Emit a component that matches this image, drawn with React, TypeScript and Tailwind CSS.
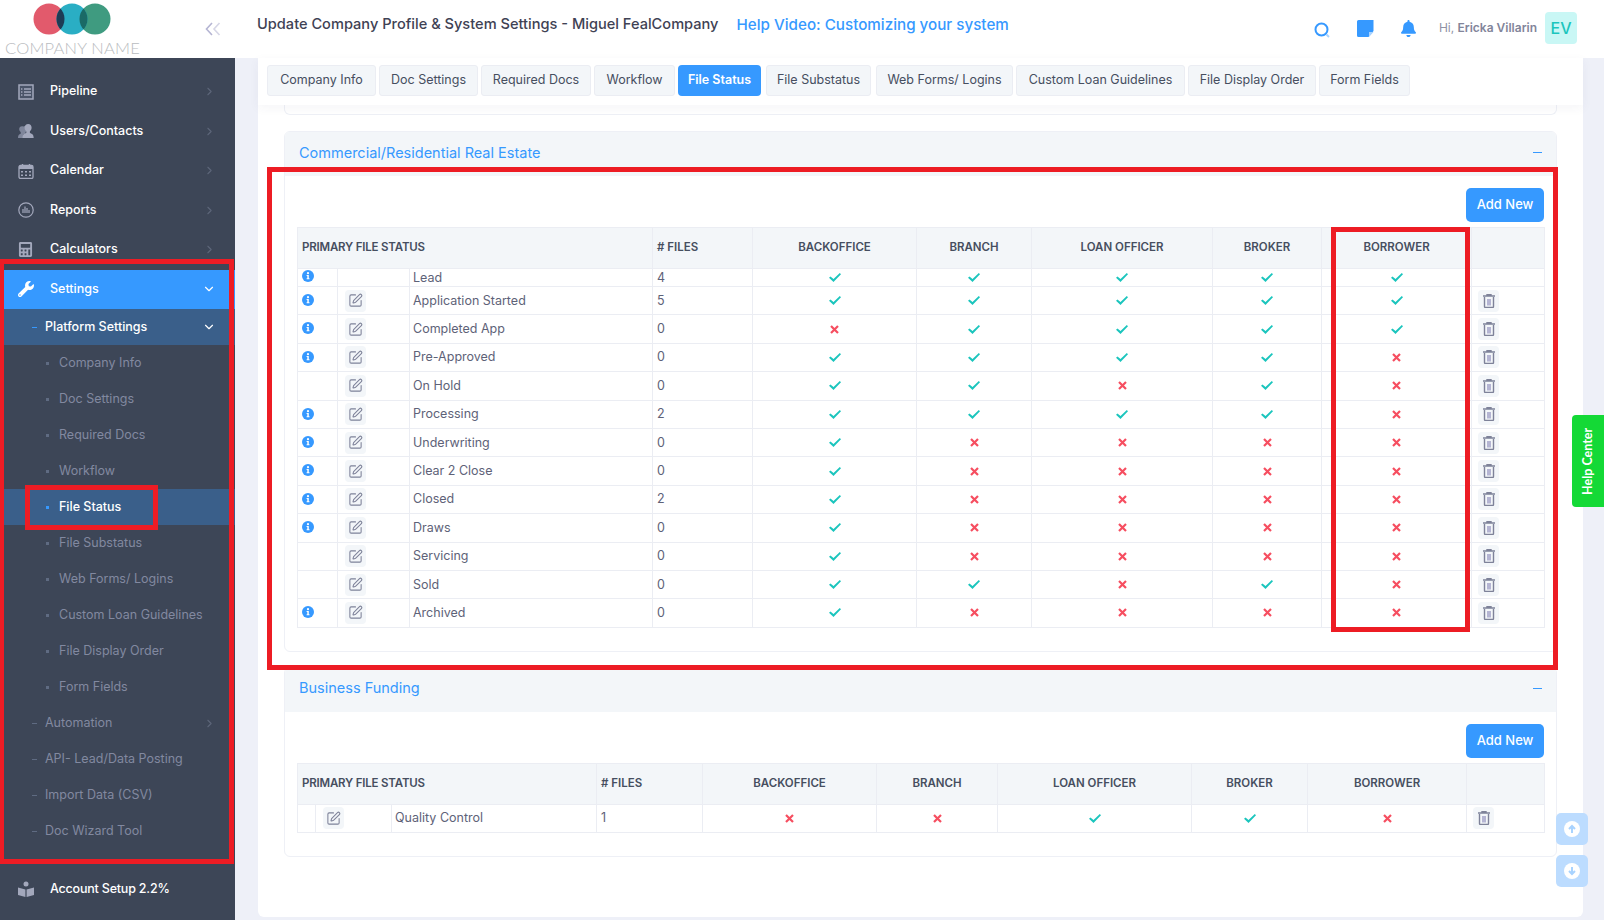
import { ChevronDown, ChevronRight, SquarePen } from "lucide-react";
import { FaBell, FaCalculator, FaWrench } from "react-icons/fa";

const font = { fontFamily: "Inter, 'Liberation Sans', sans-serif" };

const tabs = [
  { label: "Company Info", w: "w-[109px]" },
  { label: "Doc Settings", w: "w-[99px]" },
  { label: "Required Docs", w: "w-[110px]" },
  { label: "Workflow", w: "w-[81px]" },
  { label: "File Status", w: "w-[83px]", active: true },
  { label: "File Substatus", w: "ml-[2px] w-[105px]" },
  { label: "Web Forms/ Logins", w: "ml-[2px] w-[137px]" },
  { label: "Custom Loan Guidelines", w: "w-[169px]" },
  { label: "File Display Order", w: "w-[128px]" },
  { label: "Form Fields", w: "w-[91px]" },
];

type Row = {
  info: boolean;
  edit: boolean;
  name: string;
  files: string;
  perms: string;
  small?: boolean;
};

// perms: backoffice, branch, loan officer, broker, borrower (1 = yes)
const commercial: Row[] = [
  { info: true, edit: false, name: "Lead", files: "4", perms: "11111", small: true },
  { info: true, edit: true, name: "Application Started", files: "5", perms: "11111" },
  { info: true, edit: true, name: "Completed App", files: "0", perms: "01111" },
  { info: true, edit: true, name: "Pre-Approved", files: "0", perms: "11110" },
  { info: false, edit: true, name: "On Hold", files: "0", perms: "11010" },
  { info: true, edit: true, name: "Processing", files: "2", perms: "11110" },
  { info: true, edit: true, name: "Underwriting", files: "0", perms: "10000" },
  { info: true, edit: true, name: "Clear 2 Close", files: "0", perms: "10000" },
  { info: true, edit: true, name: "Closed", files: "2", perms: "10000" },
  { info: true, edit: true, name: "Draws", files: "0", perms: "10000" },
  { info: false, edit: true, name: "Servicing", files: "0", perms: "10000" },
  { info: false, edit: true, name: "Sold", files: "0", perms: "11010" },
  { info: true, edit: true, name: "Archived", files: "0", perms: "10000" },
];

const funding: Row[] = [
  { info: false, edit: true, name: "Quality Control", files: "1", perms: "00110" },
];

const commercialCols = [
  "w-[40px]", "w-[72px]", "w-[243px]", "w-[100px]", "w-[164px]",
  "w-[115px]", "w-[181px]", "w-[109px]", "w-[150px]", "w-[73px]",
];
const fundingCols = [
  "w-[18px]", "w-[76px]", "w-[205px]", "w-[106px]", "w-[174px]",
  "w-[121px]", "w-[194px]", "w-[116px]", "w-[159px]", "w-[78px]",
];

const subItems = [
  "Company Info", "Doc Settings", "Required Docs", "Workflow", "File Status",
  "File Substatus", "Web Forms/ Logins", "Custom Loan Guidelines", "File Display Order", "Form Fields",
];

function Logo() {
  return (
    <svg width="80" height="34" viewBox="0 0 80 34" className="ml-[33px] mt-[3px] block">
      <defs>
        <clipPath id="c-red"><circle cx="16" cy="16" r="15.5" /></clipPath>
        <clipPath id="c-green"><circle cx="62" cy="16" r="15.5" /></clipPath>
      </defs>
      <circle cx="16" cy="16" r="15.5" fill="#e25a6c" />
      <circle cx="62" cy="16" r="15.5" fill="#3f9b80" />
      <circle cx="39" cy="16" r="15.5" fill="#2aaec4" />
      <circle cx="39" cy="16" r="15.5" fill="#1d3c55" clipPath="url(#c-red)" />
      <circle cx="39" cy="16" r="15.5" fill="#1a6a66" clipPath="url(#c-green)" />
    </svg>
  );
}

function PipelineIcon() {
  return (
    <svg width="16" height="16" viewBox="0 0 16 16" fill="none" stroke="#a3a8bc">
      <rect x="1" y="1" width="14" height="14" strokeWidth="1.5" fill="#4a5468" />
      <path d="M3 5h1.400M6 5h7M3 8h1.400M6 8h7M3 11h1.400M6 11h7" strokeWidth="1.300" />
    </svg>
  );
}

function UsersIcon() {
  return (
    <svg width="16" height="16" viewBox="0 0 16 16">
      <path d="M5.500 3.500a2.600 2.600 0 0 1 4 2.200c0 1.700-.9 3-2 3.400v1.300L5 12v3H0c0-3 1-3.600 2.700-4.300V9.100C1.700 8.500 1.200 7.300 1.200 6c0-2 1.800-3.400 4.300-2.500z" fill="#7f869b" />
      <path d="M10.200 1c2.100 0 3.400 1.500 3.400 3.600 0 1.600-.6 3.100-1.700 3.700v1.700c2.300.8 3.700 1.500 3.800 5H4.500c.1-3.500 1.500-4.200 3.800-5V8.300C7.200 7.700 6.600 6.200 6.600 4.600 6.600 2.500 8.100 1 10.200 1z" fill="#a3a8bc" />
    </svg>
  );
}

function CalendarIcon() {
  return (
    <svg width="16" height="16" viewBox="0 0 16 16">
      <rect x="1" y="2.500" width="14" height="13" rx="1.500" fill="none" stroke="#a3a8bc" strokeWidth="1.300" />
      <path d="M1 3.500a1 1 0 0 1 1-1h12a1 1 0 0 1 1 1V6H1z" fill="#a3a8bc" />
      <path d="M4.500 1v2.500M11.500 1v2.500" stroke="#a3a8bc" strokeWidth="1.400" />
      <path d="M3 8h2v1.500H3zM7 8h2v1.500H7zM11 8h2v1.500h-2zM3 11.500h2V13H3zM7 11.500h2V13H7zM11 11.500h2V13h-2z" fill="#a3a8bc" />
    </svg>
  );
}

function ReportsIcon() {
  return (
    <svg width="16" height="16" viewBox="0 0 16 16" fill="none" stroke="#a3a8bc">
      <circle cx="8" cy="8" r="7.200" strokeWidth="1.200" />
      <path d="M5 7v4M7 4.500V11M9 6v5M11 8v3" strokeWidth="1.200" />
    </svg>
  );
}

function BookIcon() {
  return (
    <svg width="16" height="16" viewBox="0 0 16 16" fill="#a3a8bc">
      <circle cx="8" cy="3" r="2.500" />
      <path d="M0 6.500l7.400 2V16L0 14zM16 6.500l-7.400 2V16l7.400-2z" />
    </svg>
  );
}

function SideIcon({ name }: { name: string }) {
  if (name === "Pipeline") return <PipelineIcon />;
  if (name === "Users/Contacts") return <UsersIcon />;
  if (name === "Calendar") return <CalendarIcon />;
  if (name === "Reports") return <ReportsIcon />;
  if (name === "Calculators") return <FaCalculator size={15} color="#a3a8bc" />;
  return <BookIcon />;
}

function MainItem({ name }: { name: string }) {
  return (
    <div className="flex h-[39.5px] items-center pl-[18px] pr-[19px]">
      <span className="flex w-[32px] shrink-0"><SideIcon name={name} /></span>
      <span className="flex-1 text-[12.5px] font-medium text-white">{name}</span>
      <ChevronRight size={13} className="text-[#5d6679]" />
    </div>
  );
}

function Level2({ name, arrow }: { name: string; arrow?: boolean }) {
  return (
    <div className="flex h-[36px] items-center pl-[32px] pr-[19px]">
      <span className="mr-[8px] h-px w-[5px] bg-[#5f6b82]" />
      <span className="flex-1 text-[12.5px] text-[#8289a0]">{name}</span>
      {arrow && <ChevronRight size={13} className="text-[#5d6679]" />}
    </div>
  );
}

function Sidebar() {
  return (
    <aside className="flex w-[235px] shrink-0 flex-col bg-[#3d4657] pt-[14px]">
      {["Pipeline", "Users/Contacts", "Calendar", "Reports", "Calculators"].map((n) => (
        <MainItem key={n} name={n} />
      ))}
      <div className="flex h-[39.5px] items-center bg-[#3699ff] pl-[18px] pr-[19px]">
        <span className="flex w-[32px] shrink-0"><FaWrench size={16} color="#fff" /></span>
        <span className="flex-1 text-[12.5px] font-medium text-white">Settings</span>
        <ChevronDown size={14} className="text-white" />
      </div>
      <div className="flex h-[36px] items-center bg-[#3a5f8a] pl-[32px] pr-[19px]">
        <span className="mr-[8px] h-px w-[5px] bg-[#3699ff]" />
        <span className="flex-1 text-[12.5px] font-medium text-white">Platform Settings</span>
        <ChevronDown size={14} className="text-white" />
      </div>
      {subItems.map((s) => {
        const on = s === "File Status";
        return (
          <div key={s} className={on ? "flex h-[36px] items-center bg-[#3a5f8a] pl-[46px]" : "flex h-[36px] items-center pl-[46px]"}>
            <span className={on ? "mr-[10px] h-[3px] w-[3px] bg-[#3699ff]" : "mr-[10px] h-[3px] w-[3px] bg-[#5f6b82]"} />
            <span className={on ? "text-[12.5px] font-medium text-white" : "text-[12.5px] text-[#8289a0]"}>{s}</span>
          </div>
        );
      })}
      <Level2 name="Automation" arrow />
      <Level2 name="API- Lead/Data Posting" />
      <Level2 name="Import Data (CSV)" />
      <Level2 name="Doc Wizard Tool" />
      <div className="mb-[11px] mt-auto flex h-[40px] items-center pl-[18px]">
        <span className="flex w-[32px] shrink-0"><BookIcon /></span>
        <span className="text-[12.5px] font-medium tracking-[-0.2px] text-white">Account Setup 2.2%</span>
      </div>
    </aside>
  );
}

function Header() {
  return (
    <header className="flex h-[58px] shrink-0 items-start bg-white">
      <div className="relative h-full w-[235px] shrink-0">
        <Logo />
        <div className="ml-[5px] mt-[3px] text-[16.5px] font-light leading-[16px] tracking-[0.2px] text-[#b9bcc0]" style={{ fontFamily: "Lato, sans-serif" }}>
          COMPANY NAME
        </div>
        <svg width="16" height="14" viewBox="0 0 16 14" fill="none" className="absolute left-[205px] top-[22px]">
          <path d="M7 1L1.500 7 7 13" stroke="#b5b5d3" strokeWidth="1.600" />
          <path d="M14.500 1L9 7l5.500 6" stroke="#d6d6e6" strokeWidth="1.600" />
        </svg>
      </div>
      <div className="ml-[22px] flex h-[50px] flex-1 items-center">
        <span className="text-[14.6px] font-medium text-[#3f4254]">
          Update Company Profile &amp; System Settings - Miguel FealCompany
        </span>
        <span className="ml-[18px] text-[15.2px] font-medium text-[#3699ff]">Help Video: Customizing your system</span>
      </div>
      <div className="flex h-[56px] items-center pr-[27px]">
        <svg width="17" height="17" viewBox="0 0 17 17" fill="none" className="mt-[4px]">
          <circle cx="7.500" cy="7.500" r="6" stroke="#3699ff" strokeWidth="2" />
          <path d="M12.500 12.500L15 15" stroke="#a8d3ff" strokeWidth="2" />
        </svg>
        <svg width="17" height="17" viewBox="0 0 17 17" className="ml-[26px]">
          <path d="M1.500 0h15v11l-5 6h-10a1.500 1.500 0 0 1-1.500-1.500v-14A1.500 1.500 0 0 1 1.500 0z" fill="#3699ff" />
          <path d="M12 12h4.500L12 17z" fill="#a8d3ff" />
        </svg>
        <FaBell size={17} color="#3699ff" className="ml-[26px]" />
        <span className="ml-[22px] text-[12px] text-[#8f92a5]">
          Hi, <span className="font-semibold text-[#82859a]">Ericka Villarin</span>
        </span>
        <span className="ml-[8px] flex h-[32px] w-[32px] items-center justify-center rounded-[4px] bg-[#c9f7f5] text-[16px] font-medium text-[#1bc5bd]">
          EV
        </span>
      </div>
    </header>
  );
}

function InfoIcon() {
  return (
    <svg width="12" height="12" viewBox="0 0 12 12" className="block">
      <circle cx="6" cy="6" r="6" fill="#3699ff" />
      <circle cx="6" cy="3.200" r="1.100" fill="#fff" />
      <path d="M4.600 5h2.200v3.200h.7v1H4.600v-1h.7V6h-.7z" fill="#fff" />
    </svg>
  );
}

function Check() {
  return (
    <svg width="12" height="9" viewBox="0 0 12 9" className="mx-auto block">
      <path d="M0 4.700l1.500-1.300L4.500 6 10.800 0 12 1.200 4.500 9z" fill="#1bc5bd" />
    </svg>
  );
}

function Cross() {
  return (
    <svg width="9" height="9" viewBox="0 0 9 9" className="mx-auto block">
      <path d="M1 1l7 7M8 1L1 8" stroke="#f64e60" strokeWidth="2.200" />
    </svg>
  );
}

function TrashIcon() {
  return (
    <svg width="12" height="14" viewBox="0 0 12 14" fill="none">
      <path d="M0 2h12M4 2V.6h4V2" stroke="#7e8299" strokeWidth="1.400" />
      <path d="M1.500 3v9.500a1 1 0 0 0 1 1h7a1 1 0 0 0 1-1V3" stroke="#7e8299" strokeWidth="1.400" />
      <path d="M4 5h4v6.500H4z" fill="#b5b5d3" />
    </svg>
  );
}

function IconBtn({ children }: { children: React.ReactNode }) {
  return (
    <span className="flex h-[22px] w-[21px] items-center justify-center rounded-[4px] bg-[#f3f6f9]">{children}</span>
  );
}

const headCell = "border border-[#ebedf3] text-[11.5px] font-semibold text-[#464e5f]";
const cell = "border border-[#ebedf3] p-0 text-[12.5px] text-[#5e6278]";

function FileTable({ rows, cols }: { rows: Row[]; cols: string[] }) {
  const names = ["BACKOFFICE", "BRANCH", "LOAN OFFICER", "BROKER", "BORROWER"];
  return (
    <table className="w-full table-fixed border-collapse">
      <colgroup>
        {cols.map((c, i) => (
          <col key={i} className={c} />
        ))}
      </colgroup>
      <thead>
        <tr className="h-[41px] bg-[#f3f6f9]">
          <th colSpan={3} className={headCell + " pl-[4px] text-left tracking-[-0.2px]"}>PRIMARY FILE STATUS</th>
          <th className={headCell + " pl-[4px] text-left"}># FILES</th>
          {names.map((n) => (
            <th key={n} className={headCell}>{n}</th>
          ))}
          <th className={headCell} />
        </tr>
      </thead>
      <tbody>
        {rows.map((r) => (
          <tr key={r.name} className={r.small ? "h-[18px]" : "h-[28.400px]"}>
            <td className={cell + " pl-[4px] align-top"}>
              {r.info && (
                <div className={r.small ? "pt-[1px]" : "pt-[7px]"}>
                  <InfoIcon />
                </div>
              )}
            </td>
            <td className={cell + " pl-[7px]"}>
              {r.edit && <IconBtn><SquarePen size={15} color="#7e8299" strokeWidth={1.700} /></IconBtn>}
            </td>
            <td className={cell + " pl-[3px] leading-[16px]"}>{r.name}</td>
            <td className={cell + " pl-[4px] leading-[16px]"}>{r.files}</td>
            {r.perms.split("").map((p, i) => (
              <td key={i} className={cell}>{p === "1" ? <Check /> : <Cross />}</td>
            ))}
            <td className={cell + " pl-[6px]"}>
              {r.edit && <IconBtn><TrashIcon /></IconBtn>}
            </td>
          </tr>
        ))}
      </tbody>
    </table>
  );
}

function Section({ title, rows, cols }: { title: string; rows: Row[]; cols: string[] }) {
  return (
    <section className="overflow-hidden rounded-[6px] border border-[#eef0f6]">
      <div className="flex h-[44px] items-center justify-between bg-[#f3f6f9] px-[14px] pb-[3px]">
        <span className="text-[14.500px] text-[#3699ff]">{title}</span>
        <span className="h-px w-[9px] bg-[#3699ff]" />
      </div>
      <div className="px-[12px] pb-[23px] pt-[12px]">
        <div className="mb-[5px] flex justify-end">
          <button className="flex h-[34px] w-[78px] items-center justify-center rounded-[5px] bg-[#3699ff] text-[13px] font-medium text-white">
            Add New
          </button>
        </div>
        <FileTable rows={rows} cols={cols} />
      </div>
    </section>
  );
}

function Mark({ box }: { box: string }) {
  return <div className={"pointer-events-none absolute z-20 border-[5px] border-[#ed1c24] " + box} />;
}

export default function App() {
  return (
    <div className="relative flex h-[920px] w-[1604px] flex-col overflow-hidden bg-[#eef0f8]" style={font}>
      <Header />
      <div className="flex min-h-0 flex-1">
        <Sidebar />
        <main className="ml-[23px] mr-[21px] flex h-[859px] min-w-0 flex-1 flex-col rounded-b-[6px] bg-white">
          <div className="relative z-10 flex h-[47px] shrink-0 gap-[3px] bg-white pl-[9px] pt-[7px] shadow-[0_3px_10px_rgba(60,60,90,0.05)]">
            {tabs.map((t) => (
              <span
                key={t.label}
                className={
                  t.active
                    ? "flex h-[31px] items-center justify-center rounded-[4px] bg-[#3699ff] text-[12.500px] font-semibold text-white " + t.w
                    : "flex h-[31px] items-center justify-center rounded-[3px] border border-[#ebedf3] bg-[#f3f6f9] text-[12.500px] text-[#464e5f] " + t.w
                }
              >
                {t.label}
              </span>
            ))}
          </div>
          <div className="flex flex-col gap-[15px] pl-[26px] pr-[26px]">
            <div className="mb-px h-[10px] rounded-b-[6px] border border-t-0 border-[#eef0f6]" />
            <Section title="Commercial/Residential Real Estate" rows={commercial} cols={commercialCols} />
            <Section title="Business Funding" rows={funding} cols={fundingCols} />
          </div>
        </main>
      </div>

      {/* red review marks drawn over the screenshot */}
      <Mark box="left-[-1px] top-[259px] h-[605px] w-[235px]" />
      <Mark box="left-[25px] top-[485px] h-[45px] w-[133px]" />
      <Mark box="left-[267px] top-[167px] h-[503px] w-[1291px]" />
      <Mark box="left-[1331px] top-[227px] h-[405px] w-[139px]" />

      <div className="absolute left-[1572px] top-[415px] z-30 flex h-[92px] w-[32px] items-center justify-center rounded-l-[4px] bg-[#14d936]">
        <span className="ml-[2px] -rotate-90 whitespace-nowrap text-[12.5px] font-bold text-white" style={{ fontFamily: "Lato, sans-serif" }}>Help Center</span>
      </div>
      <div className="absolute left-[1556px] top-[813px] z-30 flex flex-col gap-[10px]">
        {["M6 10V3M3 6l3-3 3 3", "M6 2v7M3 6l3 3 3-3"].map((d) => (
          <div key={d} className="flex h-[32px] w-[32px] items-center justify-center rounded-[5px] bg-[#bcdcff]">
            <span className="flex h-[16px] w-[16px] items-center justify-center rounded-full bg-white">
              <svg width="12" height="12" viewBox="0 0 12 12" fill="none"><path d={d} stroke="#a8d3ff" strokeWidth="2" /></svg>
            </span>
          </div>
        ))}
      </div>
    </div>
  );
}
